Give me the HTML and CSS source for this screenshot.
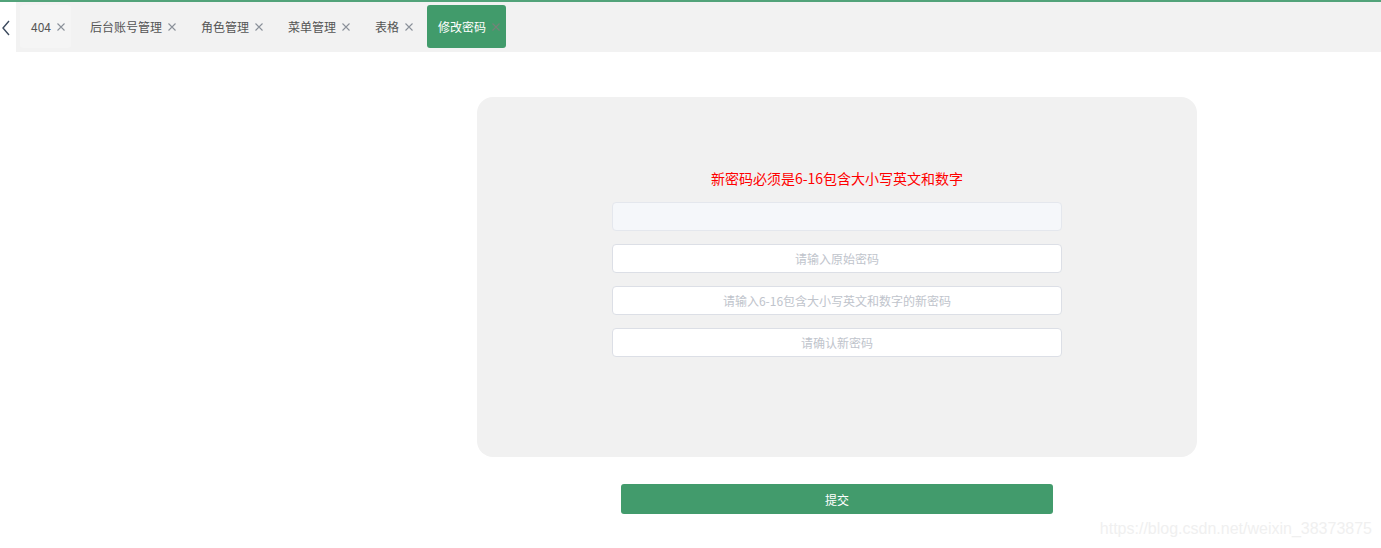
FILE: index.html
```html
<!DOCTYPE html>
<html lang="zh-CN">
<head>
    <meta charset="UTF-8">
    <title>修改密码</title>
    <link rel="stylesheet" href="styles.css">
</head>
<body>
    <div class="topline"></div>
    <div class="tabbar">
        <div class="tab-prev">
            <svg width="10" height="16" viewBox="0 0 10 16"><path d="M8 1 L2 8 L8 15" fill="none" stroke="#3c4a5e" stroke-width="1.4"/></svg>
        </div>
        <div class="tabs">
            <div class="tab first">404<svg class="close" width="8" height="8" viewBox="0 0 8 8"><path d="M0.5 0.5 L7.5 7.5 M7.5 0.5 L0.5 7.5"/></svg></div>
            <div class="tab">后台账号管理<svg class="close" width="8" height="8" viewBox="0 0 8 8"><path d="M0.5 0.5 L7.5 7.5 M7.5 0.5 L0.5 7.5"/></svg></div>
            <div class="tab">角色管理<svg class="close" width="8" height="8" viewBox="0 0 8 8"><path d="M0.5 0.5 L7.5 7.5 M7.5 0.5 L0.5 7.5"/></svg></div>
            <div class="tab">菜单管理<svg class="close" width="8" height="8" viewBox="0 0 8 8"><path d="M0.5 0.5 L7.5 7.5 M7.5 0.5 L0.5 7.5"/></svg></div>
            <div class="tab">表格<svg class="close" width="8" height="8" viewBox="0 0 8 8"><path d="M0.5 0.5 L7.5 7.5 M7.5 0.5 L0.5 7.5"/></svg></div>
            <div class="tab active">修改密码<svg class="close" width="8" height="8" viewBox="0 0 8 8"><path d="M0.5 0.5 L7.5 7.5 M7.5 0.5 L0.5 7.5"/></svg></div>
        </div>
    </div>
    <div class="main">
        <div class="card">
            <p class="tip">新密码必须是6-16包含大小写英文和数字</p>
            <input class="field" type="text" disabled>
            <input class="field" type="password" placeholder="请输入原始密码">
            <input class="field" type="password" placeholder="请输入6-16包含大小写英文和数字的新密码">
            <input class="field" type="password" placeholder="请确认新密码">
        </div>
        <button class="submit" type="button">提交</button>
    </div>
    <div class="watermark">https://blog.csdn.net/weixin_38373875</div>
</body>
</html>
```

FILE: styles.css
```css
body { margin: 0; font-family: "Microsoft YaHei", "Noto Sans CJK SC", sans-serif; background: #fff; height: 548px; overflow: hidden; position: relative; }
.topline { height: 2px; background: #52a37a; }
.tabbar { display: flex; height: 50px; }
.tab-prev { width: 16px; display: flex; align-items: center; padding-left: 1px; padding-top: 1px; box-sizing: border-box; }
.tabs { flex: 1; background: #f2f2f2; display: flex; align-items: flex-start; padding: 3px 0 0 4px; }
.tab { height: 43px; display: flex; align-items: center; padding: 0 6px 0 11px; margin-right: 8px; font-size: 12px; color: #555; border-radius: 3px; white-space: nowrap; }
.tab.first { background: #f5f5f5; }
.tab .close { margin-left: 6px; stroke: #8a9099; stroke-width: 1.1; fill: none; }
.tab.active { background: #419b6b; color: #fff; }
.tab.active .close { stroke: #758279; }
.main { padding: 45px 0 0 477px; }
.card { width: 720px; height: 360px; box-sizing: border-box; background: #f1f1f1; border-radius: 16px; padding-top: 71px; display: flex; flex-direction: column; align-items: center; }
.tip { margin: 0 0 14px; font-size: 14px; line-height: 20px; color: #ff0000; }
.field { width: 450px; height: 29px; box-sizing: border-box; margin-bottom: 13px; border: 1px solid #dcdfe6; border-radius: 4px; background: #fff; text-align: center; font-size: 12px; font-family: inherit; outline: none; }
.field::placeholder { color: #c0c4cc; }
.field:disabled { background: #f5f7fa; border-color: #e4e7ed; }
.submit { display: block; margin: 27px 0 0 144px; width: 432px; height: 30px; border: none; border-radius: 3px; background: #429b6c; color: #fff; font-size: 12px; font-family: inherit; }
.watermark { position: absolute; right: 9px; bottom: 10px; font-family: "Liberation Sans", Arial, sans-serif; font-size: 16px; color: #f0f0f0; }
```
